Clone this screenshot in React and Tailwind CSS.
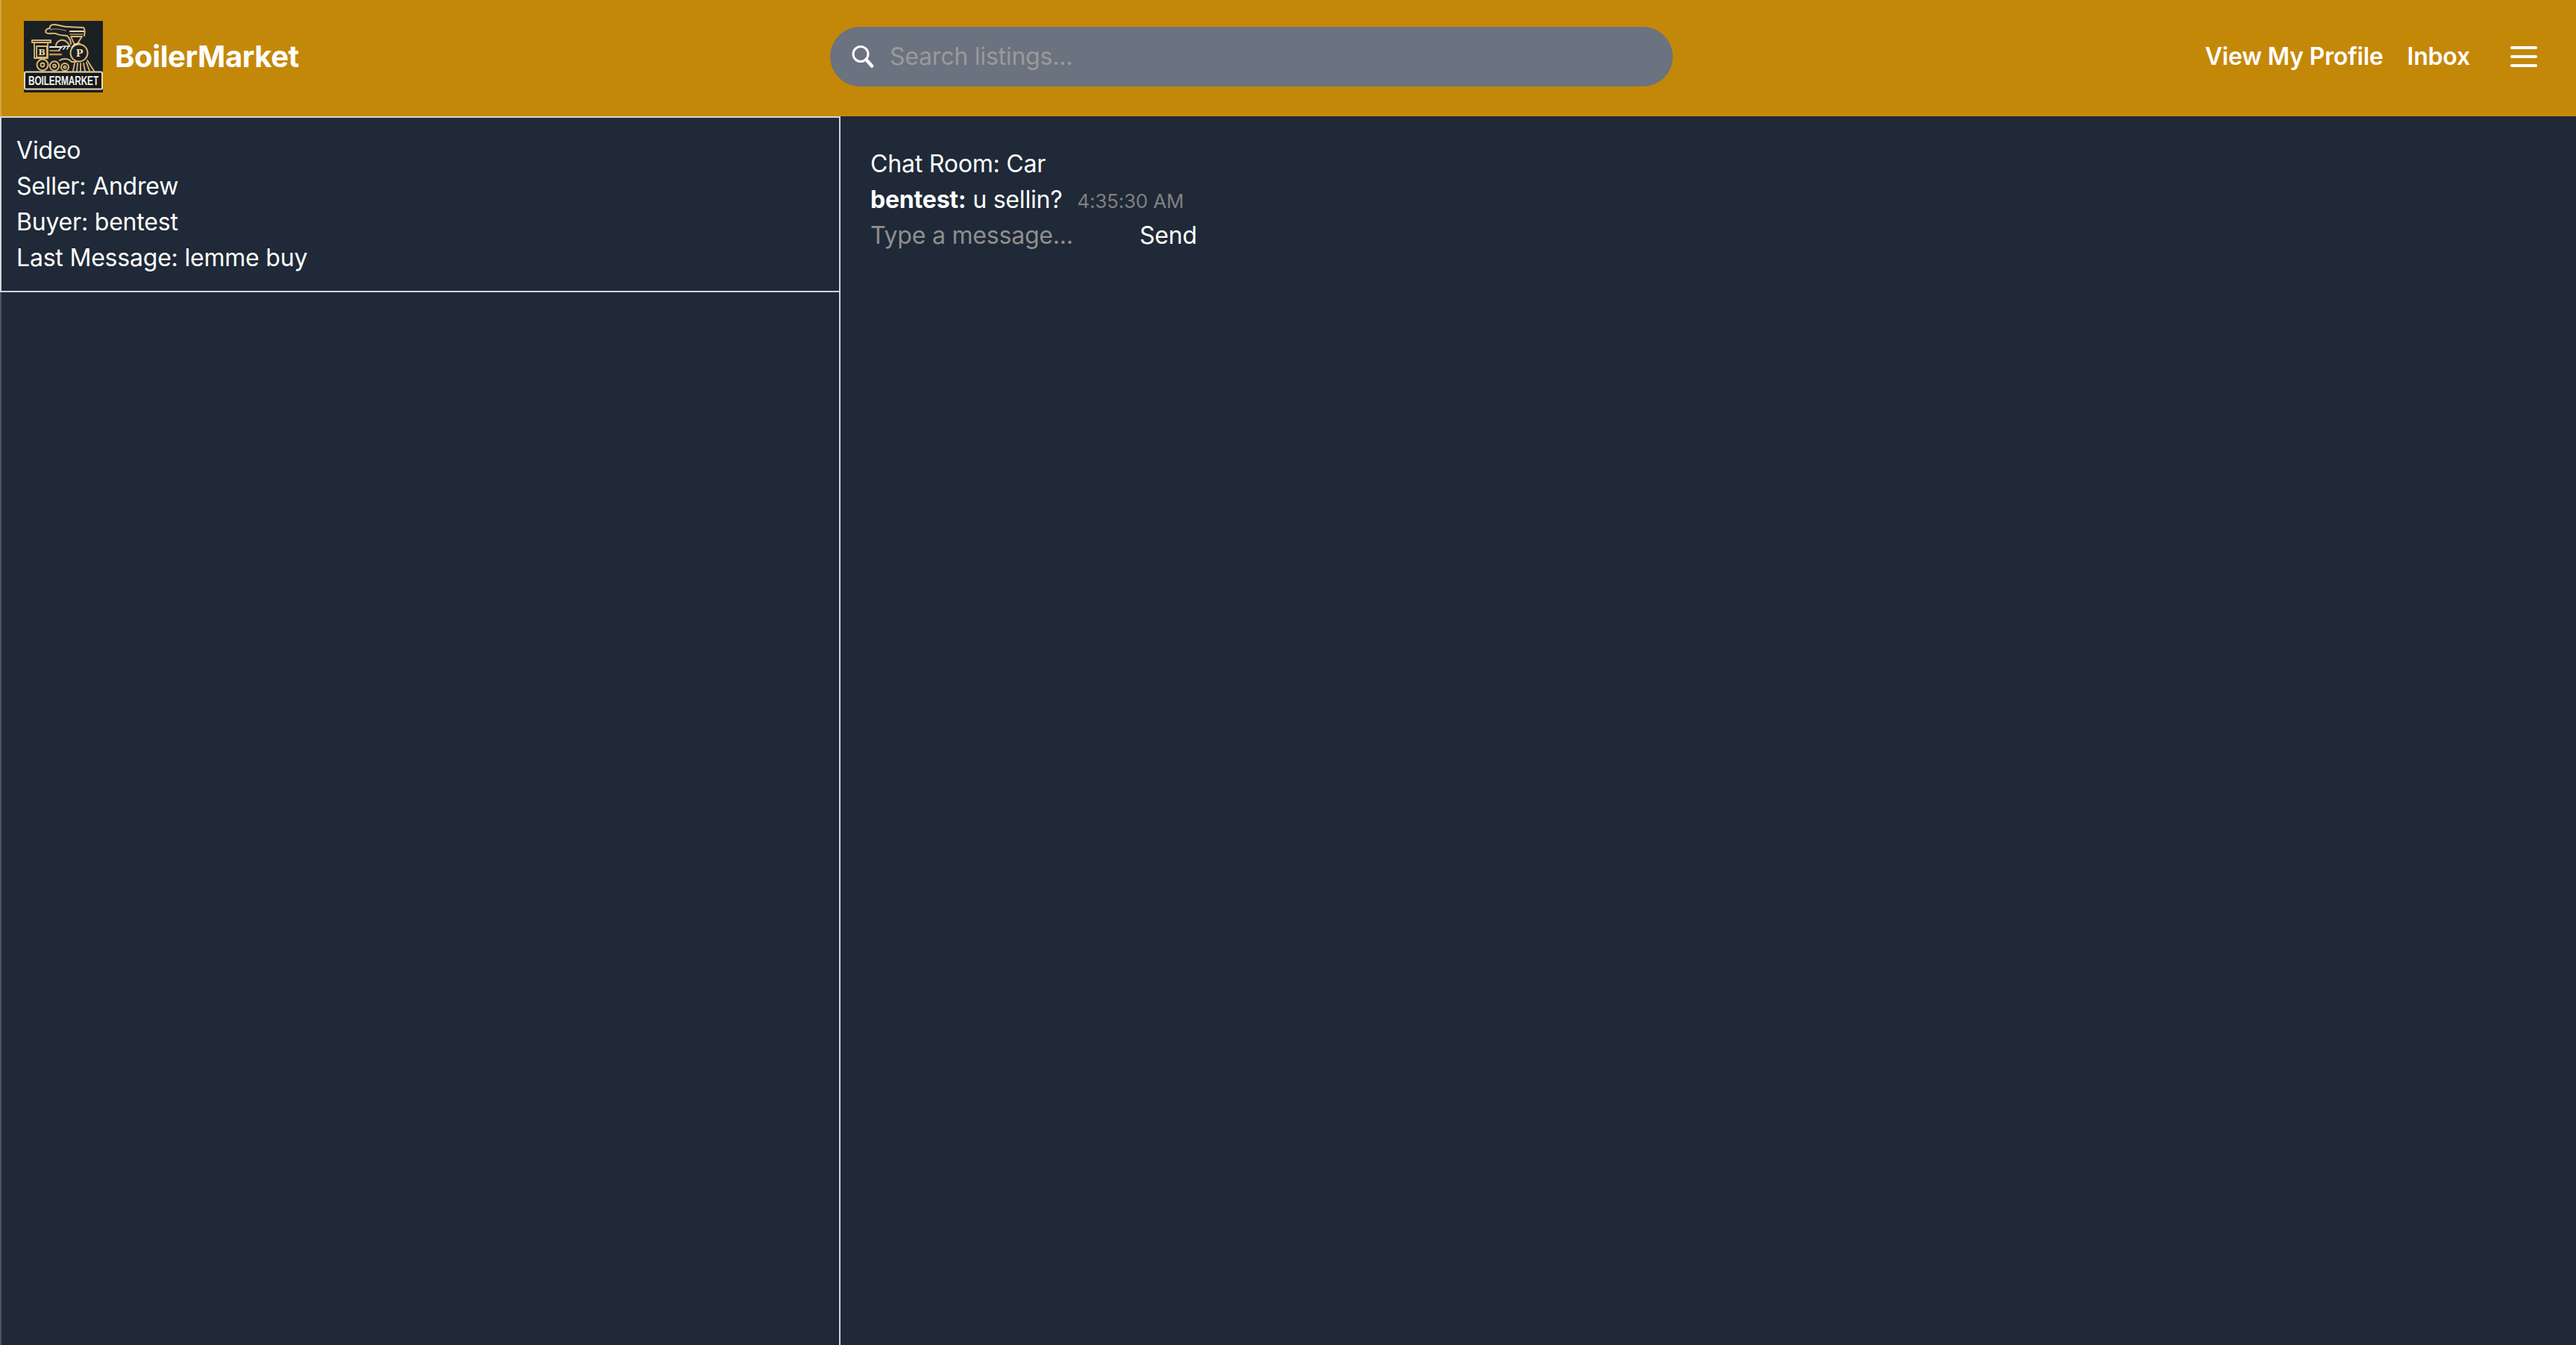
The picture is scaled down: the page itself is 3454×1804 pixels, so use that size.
import React from "react";

const gold = "#dcb673";

// Blurry train badge from the header
const Logo = () => (
  <svg viewBox="0 0 106 96" className="w-[106px] h-[96px] shrink-0 bg-[#1b2023]">
    <g fill="none" stroke={gold} strokeWidth="1.8" strokeLinejoin="round" strokeLinecap="round" className="blur-[0.4px]">
      {/* smoke */}
      <path d="M81 20 C82 15 82 11 80 9 L60 8 C52 8 47 5 40 5 C36 5 34 8 35 10 C30 10 28 14 30 16 C33 18 38 16 43 17 C48 20 54 19 58 20 C61 23 63 27 63 31" strokeWidth="2" />
      <path d="M36 12 C42 9 50 12 56 13" stroke="#8c8168" strokeWidth="1.4" />
      {/* stack */}
      <path d="M62 14 H80" strokeWidth="2.2" stroke="#ecd7ae" />
      <path d="M62 18 H79" strokeWidth="1.6" stroke="#c28f45" />
      <path d="M63 21 H78 L71.5 31 H67.5 Z" />
      {/* dome and top of boiler */}
      <path d="M43 33 C44 27 50 24 56 27 C59 29 60 31 61 33" strokeWidth="2" />
      {/* cab */}
      <path d="M11 29 V26 H36 V29 H11" strokeWidth="2" />
      <path d="M14 30 V50 H32 V30 M17 34 H31 V49 H17 Z" />
      {/* window stripes */}
      <path d="M35 35 H50" stroke="#f2ead8" strokeWidth="2" />
      <path d="M35 40 H48" strokeWidth="1.6" />
      <path d="M35 45 H50" stroke="#c28f45" strokeWidth="2.4" />
      {/* diagonal streaks */}
      <path d="M47 39 L52 34 H62 M53 38 L56 34 M58 38 L60 34" stroke="#f2ead8" strokeWidth="1.6" />
      {/* piston */}
      <path d="M48 53 C52 50 60 50 64 55 H70" strokeWidth="2" />
      {/* smokebox */}
      <circle cx="74" cy="43" r="11.5" strokeWidth="2" />
      <path d="M64 36 C66 32 70 30 75 30" stroke="#eee0c4" strokeWidth="1.4" />
      {/* wheels */}
      <circle cx="25" cy="59" r="7.5" strokeWidth="2" />
      <circle cx="25" cy="59" r="2.5" />
      <circle cx="41" cy="60.5" r="6.2" strokeWidth="2" />
      <circle cx="41" cy="60.5" r="2" />
      <circle cx="55" cy="62" r="5" strokeWidth="2" />
      <circle cx="55" cy="62" r="1.6" />
      {/* cowcatcher */}
      <path d="M68 57 L66 67 M72 57 L71 67 M76 57 L76 67 M80 57 L82 67 M84 56 L88 67 M85 53 L94 67" />
    </g>
    <text x="24" y="46" textAnchor="middle" fontFamily="'DejaVu Serif', serif" fontWeight="700" fontSize="11" fill="#f0dca8">B</text>
    <text x="74.5" y="48" textAnchor="middle" fontFamily="'DejaVu Serif', serif" fontWeight="700" fontSize="13" fill="#f0dca8">P</text>
    <rect x="1" y="68.5" width="104" height="23" rx="1.5" fill="#14181a" stroke="#ecd9b4" strokeWidth="2" />
    <text transform="translate(53 86) scale(0.7 1)" textAnchor="middle" fontFamily="'Liberation Sans', sans-serif" fontWeight="700" fontSize="17" fill="#f4f1ea">BOILERMARKET</text>
  </svg>
);

const SearchIcon = () => (
  <svg viewBox="0 0 30 32" className="w-[30px] h-[32px] shrink-0" fill="none" stroke="#fff">
    <circle cx="12" cy="12.5" r="10" strokeWidth="3" />
    <path d="M19.5 20 L27 28.5" strokeWidth="4.5" strokeLinecap="round" />
  </svg>
);

const MenuIcon = () => (
  <svg viewBox="0 0 36 28" className="w-9 h-7 shrink-0" stroke="#fff" strokeWidth="4" strokeLinecap="round">
    <path d="M2 2 H34 M2 14 H34 M2 26 H34" />
  </svg>
);

const Navbar = () => (
  <header className="h-[156px] shrink-0 flex items-center bg-[#c48809] border-l-2 border-[#d2a444] pl-[30px] pr-[52px] pb-1 text-white">
    <div className="flex items-center w-[1081px] shrink-0">
      <Logo />
      <span className="ml-4 text-[40px] font-bold tracking-[-0.4px]">BoilerMarket</span>
    </div>
    <div className="flex items-center w-[1130px] h-20 rounded-full bg-[#6b7280] pl-[29px]">
      <SearchIcon />
      <input
        placeholder="Search listings..."
        className="ml-[21px] flex-1 bg-transparent text-[32px] outline-none placeholder:text-[#9a9a9a]"
      />
    </div>
    <nav className="ml-auto flex items-center text-[32px] font-semibold">
      <a>View My Profile</a>
      <a className="ml-8">Inbox</a>
      <span className="ml-[54px] flex">
        <MenuIcon />
      </span>
    </nav>
  </header>
);

const Sidebar = () => (
  <aside className="w-[1127px] shrink-0 border-l-2 border-r-2 border-l-[#4b5563] border-r-[#d1d5db]">
    <div className="-ml-[2px] border-2 border-r-0 border-[#d1d5db] p-5 text-[32px] leading-[48px]">
      <p>Video</p>
      <p>Seller: Andrew</p>
      <p>Buyer: bentest</p>
      <p>Last Message: lemme buy</p>
    </div>
  </aside>
);

const ChatRoom = () => (
  <section className="flex-1 p-10 text-[32px] leading-[48px]">
    <p>Chat Room: Car</p>
    <p>
      <strong className="font-bold">bentest:</strong> u sellin?
      <span className="ml-5 text-[26px] text-[#808080]">4:35:30 AM</span>
    </p>
    <div className="flex items-center h-11">
      <input
        placeholder="Type a message..."
        className="w-[361px] bg-transparent outline-none placeholder:text-[#8f8f8f]"
      />
      <button>Send</button>
    </div>
  </section>
);

export default function App() {
  return (
    <div className="h-screen flex flex-col bg-[#1f2937] text-white font-['Inter',sans-serif] tracking-[-0.2px] overflow-hidden">
      <Navbar />
      <main className="flex flex-1 min-h-0">
        <Sidebar />
        <ChatRoom />
      </main>
    </div>
  );
}
